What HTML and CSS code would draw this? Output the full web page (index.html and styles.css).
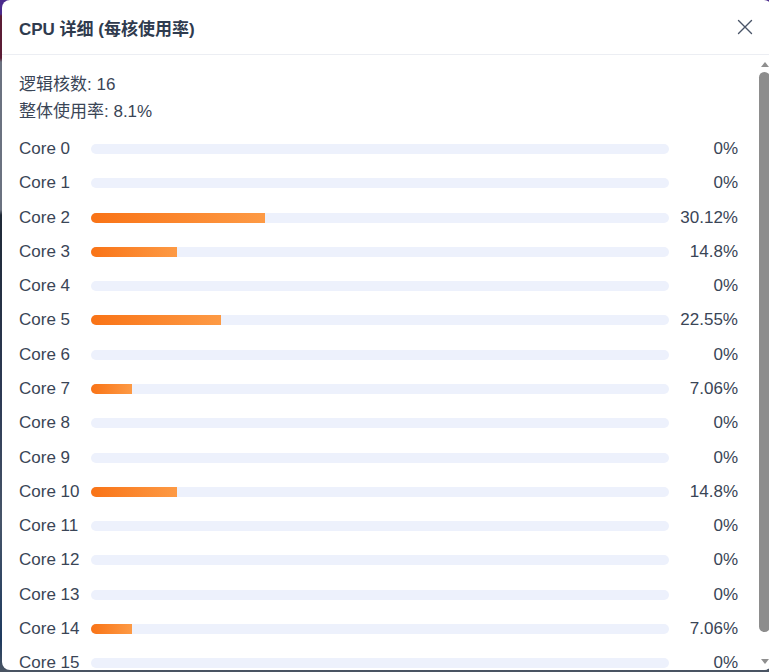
FILE: index.html
```html
<!DOCTYPE html>
<html lang="zh-CN">
<head>
<meta charset="utf-8">
<title>CPU 详细</title>
<link rel="stylesheet" href="styles.css">
</head>
<body>
<div class="backdrop">
  <div class="dialog">
    <div class="dialog-header">
      <div class="dialog-title">CPU 详细 (每核使用率)</div>
      <button class="close-btn" aria-label="关闭">
        <svg width="16" height="16" viewBox="0 0 16 16"><path d="M1.5 1.5 L14.5 14.5 M14.5 1.5 L1.5 14.5" stroke="#4a5568" stroke-width="1.4" fill="none" stroke-linecap="round"/></svg>
      </button>
    </div>
    <div class="dialog-main">
      <div class="dialog-body">
        <div class="info">
          <div class="info-line">逻辑核数: 16</div>
          <div class="info-line">整体使用率: 8.1%</div>
        </div>
        <div class="cores">
          <div class="core-row"><span class="core-label">Core 0</span><div class="track"><div class="fill" style="width:0%"></div></div><span class="core-pct">0%</span></div>
          <div class="core-row"><span class="core-label">Core 1</span><div class="track"><div class="fill" style="width:0%"></div></div><span class="core-pct">0%</span></div>
          <div class="core-row"><span class="core-label">Core 2</span><div class="track"><div class="fill" style="width:30.12%"></div></div><span class="core-pct">30.12%</span></div>
          <div class="core-row"><span class="core-label">Core 3</span><div class="track"><div class="fill" style="width:14.8%"></div></div><span class="core-pct">14.8%</span></div>
          <div class="core-row"><span class="core-label">Core 4</span><div class="track"><div class="fill" style="width:0%"></div></div><span class="core-pct">0%</span></div>
          <div class="core-row"><span class="core-label">Core 5</span><div class="track"><div class="fill" style="width:22.55%"></div></div><span class="core-pct">22.55%</span></div>
          <div class="core-row"><span class="core-label">Core 6</span><div class="track"><div class="fill" style="width:0%"></div></div><span class="core-pct">0%</span></div>
          <div class="core-row"><span class="core-label">Core 7</span><div class="track"><div class="fill" style="width:7.06%"></div></div><span class="core-pct">7.06%</span></div>
          <div class="core-row"><span class="core-label">Core 8</span><div class="track"><div class="fill" style="width:0%"></div></div><span class="core-pct">0%</span></div>
          <div class="core-row"><span class="core-label">Core 9</span><div class="track"><div class="fill" style="width:0%"></div></div><span class="core-pct">0%</span></div>
          <div class="core-row"><span class="core-label">Core 10</span><div class="track"><div class="fill" style="width:14.8%"></div></div><span class="core-pct">14.8%</span></div>
          <div class="core-row"><span class="core-label">Core 11</span><div class="track"><div class="fill" style="width:0%"></div></div><span class="core-pct">0%</span></div>
          <div class="core-row"><span class="core-label">Core 12</span><div class="track"><div class="fill" style="width:0%"></div></div><span class="core-pct">0%</span></div>
          <div class="core-row"><span class="core-label">Core 13</span><div class="track"><div class="fill" style="width:0%"></div></div><span class="core-pct">0%</span></div>
          <div class="core-row"><span class="core-label">Core 14</span><div class="track"><div class="fill" style="width:7.06%"></div></div><span class="core-pct">7.06%</span></div>
          <div class="core-row"><span class="core-label">Core 15</span><div class="track"><div class="fill" style="width:0%"></div></div><span class="core-pct">0%</span></div>
        </div>
      </div>
      <div class="scrollbar" aria-hidden="true">
        <div class="sb-btn">
          <svg width="8" height="5" viewBox="0 0 8 5"><path d="M0 5 L4 0 L8 5 Z" fill="#8f8f8f"/></svg>
        </div>
        <div class="sb-track"><div class="sb-thumb"></div></div>
        <div class="sb-btn sb-btn-down">
          <svg width="8" height="5" viewBox="0 0 8 5"><path d="M0 0 L8 0 L4 5 Z" fill="#8f8f8f"/></svg>
        </div>
      </div>
    </div>
  </div>
</div>
</body>
</html>
```

FILE: styles.css
```css
html, body {
  margin: 0;
  padding: 0;
  height: 100%;
  overflow: hidden;
}
body {
  background: linear-gradient(180deg, #4a2a8c 0px, #4a2a8c 14px, #5b1c35 16px, #5b1c35 58px, #6b7280 62px, #6b7280 210px, #1f2937 215px, #2d3a55 400px, #475569 520px, #1e3a5f 640px, #4b5563 672px);
  font-family: "Liberation Sans", Arial, "Noto Sans CJK SC", sans-serif;
}
.backdrop {
  height: 100%;
  padding-left: 2px;
}
.dialog {
  width: 770px;
  height: 670px;
  background: #ffffff;
  border-radius: 8px;
  display: flex;
  flex-direction: column;
  overflow: hidden;
}
.dialog-header {
  flex: 0 0 54px;
  display: flex;
  align-items: center;
  justify-content: space-between;
  padding: 0 19px 0 17px;
  border-bottom: 1px solid #eceef3;
}
.dialog-title {
  font-size: 17px;
  font-weight: bold;
  color: #2f3b4e;
}
.close-btn {
  border: 0;
  background: none;
  padding: 0;
  width: 16px;
  height: 16px;
  display: flex;
  align-items: center;
  justify-content: center;
  cursor: pointer;
  margin-top: -1px;
}
.dialog-main {
  flex: 1 1 auto;
  min-height: 0;
  display: flex;
}
.dialog-body {
  flex: 1 1 auto;
  min-width: 0;
  overflow: hidden;
  padding: 16px 19px 22px 17px;
  color: #3a4556;
  font-size: 17px;
}
.scrollbar {
  flex: 0 0 15px;
  display: flex;
  flex-direction: column;
  background: #ffffff;
}
.sb-btn {
  flex: 0 0 15px;
  display: flex;
  align-items: center;
  justify-content: center;
  padding-top: 3px;
  box-sizing: border-box;
}
.sb-btn-down {
  padding-top: 0;
  padding-bottom: 0;
  align-items: flex-start;
  padding-top: 4px;
}
.sb-track {
  flex: 1 1 auto;
  padding: 2px;
}
.sb-thumb {
  height: 560px;
  background: #8d8d8d;
  border-radius: 6px;
}
.info-line {
  line-height: 27px;
}
.cores {
  margin-top: 12px;
  display: flex;
  flex-direction: column;
  gap: 10px;
}
.core-row {
  height: 24.27px;
  flex: 0 0 auto;
  display: flex;
  align-items: center;
}
.core-label {
  flex: 0 0 72px;
}
.track {
  flex: 1 1 auto;
  height: 10px;
  border-radius: 5px;
  background: #edf1fc;
  overflow: hidden;
}
.fill {
  height: 100%;
  background: linear-gradient(90deg, #f97316, #fd9a45);
}
.core-pct {
  flex: 0 0 69px;
  text-align: right;
}
```
